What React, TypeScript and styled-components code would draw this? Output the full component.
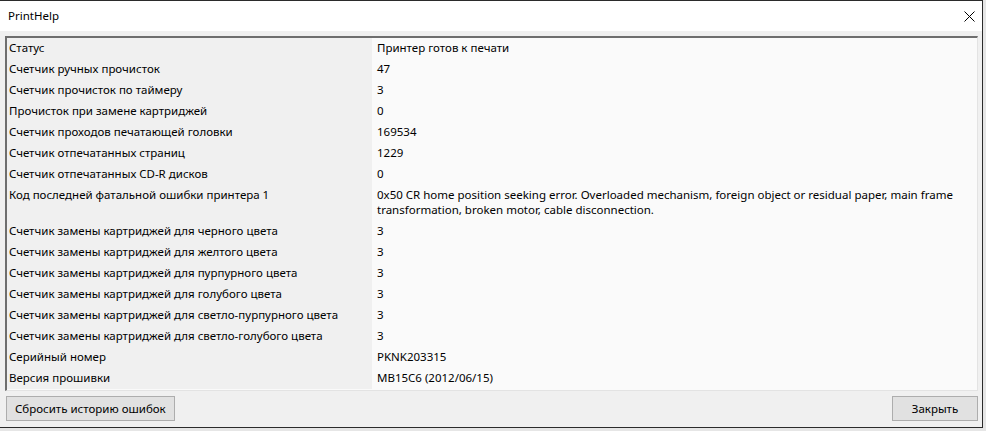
import * as React from 'react';
import styled, { createGlobalStyle } from 'styled-components';

interface IField {
  label: string;
  value: string;
}

const fields: IField[] = [
  { label: 'Статус', value: 'Принтер готов к печати' },
  { label: 'Счетчик ручных прочисток', value: '47' },
  { label: 'Счетчик прочисток по таймеру', value: '3' },
  { label: 'Прочисток при замене картриджей', value: '0' },
  { label: 'Счетчик проходов печатающей головки', value: '169534' },
  { label: 'Счетчик отпечатанных страниц', value: '1229' },
  { label: 'Счетчик отпечатанных CD-R дисков', value: '0' },
  {
    label: 'Код последней фатальной ошибки принтера 1',
    value: '0x50 CR home position seeking error. Overloaded mechanism, foreign object or residual paper, main frame transformation, broken motor, cable disconnection.',
  },
  { label: 'Счетчик замены картриджей для черного цвета', value: '3' },
  { label: 'Счетчик замены картриджей для желтого цвета', value: '3' },
  { label: 'Счетчик замены картриджей для пурпурного цвета', value: '3' },
  { label: 'Счетчик замены картриджей для голубого цвета', value: '3' },
  { label: 'Счетчик замены картриджей для светло-пурпурного цвета', value: '3' },
  { label: 'Счетчик замены картриджей для светло-голубого цвета', value: '3' },
  { label: 'Серийный номер', value: 'PKNK203315' },
  { label: 'Версия прошивки', value: 'MB15C6 (2012/06/15)' },
];

const GlobalStyle = createGlobalStyle`
  html, body {
    margin: 0;
    padding: 0;
    background: #e6e6e6;
  }
  body {
    font-family: 'Noto Sans', 'DejaVu Sans', sans-serif;
    font-size: 11.5px;
    color: #000;
  }
`;

const Window = styled.div`
  width: 983px;
  height: 428px;
  box-sizing: border-box;
  border: 1px solid #2b2b2b;
  border-left: none;
  background: #f0f0f0;
  display: flex;
  flex-direction: column;
`;

const TitleBar = styled.div`
  height: 30px;
  flex: none;
  background: #fff;
  display: flex;
  align-items: center;
  justify-content: space-between;
  padding: 0 3px 0 8px;
`;

const Title = styled.span`
  font-size: 11.5px;
  line-height: 16px;
`;

const CloseButton = styled.button`
  width: 20px;
  height: 20px;
  border: none;
  background: transparent;
  padding: 0;
  display: flex;
  align-items: center;
  justify-content: center;
`;

const Body = styled.div`
  flex: 1;
  display: flex;
  flex-direction: column;
  padding: 5px 4px 6px 5px;
  gap: 5px;
`;

const List = styled.div`
  flex: 1;
  box-sizing: border-box;
  border-top: 2px solid #6e6e6e;
  border-left: 2px solid #6e6e6e;
  border-right: 1px solid #e3e3e3;
  border-bottom: 1px solid #e3e3e3;
  background: #fafafa;
  display: grid;
  grid-template-columns: 365px 1fr;
  align-content: start;
`;

const Cell = styled.div<{ $key?: boolean }>`
  padding: 2px ${p => (p.$key ? '4px' : '6px')} 4px ${p => (p.$key ? '2px' : '5px')};
  line-height: 15px;
  background: ${p => (p.$key ? '#f0f0f0' : '#fafafa')};
  white-space: ${p => (p.$key ? 'nowrap' : 'normal')};
`;

const Footer = styled.div`
  display: flex;
  justify-content: space-between;
  padding: 0 0 0 1px;
`;

const Button = styled.button`
  height: 25px;
  box-sizing: border-box;
  border: 1px solid #adadad;
  background: #e1e1e1;
  font-family: inherit;
  font-size: 11.5px;
  color: #000;
  padding: 0 8px;
  min-width: 86px;
`;

export default function App() {
  return (
    <>
      <GlobalStyle />
      <Window>
        <TitleBar>
          <Title>PrintHelp</Title>
          <CloseButton aria-label="close">
            <svg width="11" height="11" viewBox="0 0 11 11">
              <path d="M0.5 0.5 L10.5 10.5 M10.5 0.5 L0.5 10.5" stroke="#000" strokeWidth="1" fill="none" />
            </svg>
          </CloseButton>
        </TitleBar>
        <Body>
          <List>
            {fields.map((f, index) => (
              <React.Fragment key={index}>
                <Cell $key>{f.label}</Cell>
                <Cell>{f.value}</Cell>
              </React.Fragment>
            ))}
          </List>
          <Footer>
            <Button>Сбросить историю ошибок</Button>
            <Button>Закрыть</Button>
          </Footer>
        </Body>
      </Window>
    </>
  );
}
